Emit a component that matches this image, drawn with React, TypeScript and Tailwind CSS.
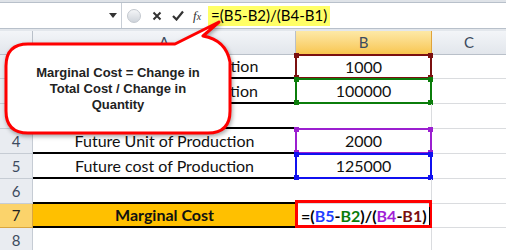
import React from 'react';

const rows = [1, 2, 3, 4, 5, 6, 7, 8];
const rowH = ['h-[24px]', 'h-[25px]', 'h-[25px]', 'h-[25px]', 'h-[25px]', 'h-[25px]', 'h-[24px]', 'h-[25px]'];

const aText: Record<number, string> = {
  1: 'Current Unit of Production',
  2: 'Current cost of Production',
  4: 'Future Unit of Production',
  5: 'Future cost of Production',
};

const bRange: Record<number, { value: string; color: string; sq: string }> = {
  1: { value: '1000', color: 'border-[#7b1010]', sq: 'bg-[#7b1010]' },
  2: { value: '100000', color: 'border-[#0b7d0b]', sq: 'bg-[#0b7d0b]' },
  4: { value: '2000', color: 'border-[#9b1fd0]', sq: 'bg-[#9b1fd0]' },
  5: { value: '125000', color: 'border-[#1010f0]', sq: 'bg-[#1010f0]' },
};

const Corner = ({ cls, pos }: { cls: string; pos: string }) => (
  <span className={`absolute w-[5px] h-[5px] ${cls} ${pos}`} />
);

const FormulaBar = () => (
  <div className="flex h-[26px] border-b border-[#b8c0ca] bg-white">
    <div className="w-[122px] flex items-center justify-end pr-[4px] border-r border-[#c8ced6]">
      <svg width="8" height="5" viewBox="0 0 8 5"><path d="M0 0h8L4 5z" fill="#333" /></svg>
    </div>
    <div className="w-[85px] flex items-center bg-white">
      <span className="ml-[5px] w-[14px] h-[14px] rounded-full bg-gradient-to-b from-[#f4f5f7] to-[#cfd4db] border border-[#c3c8cf]" />
      <svg className="ml-[11px]" width="10" height="10" viewBox="0 0 10 10">
        <path d="M1.5 1.5l7 7M8.5 1.5l-7 7" stroke="#333" strokeWidth="2" />
      </svg>
      <svg className="ml-[10px]" width="12" height="11" viewBox="0 0 12 11">
        <path d="M1 6l3.5 3.5L11 1.5" stroke="#333" strokeWidth="2.2" fill="none" />
      </svg>
      <span className="ml-[9px] text-[13px] italic text-[#333] leading-none" style={{ fontFamily: '"Liberation Serif", serif' }}>
        f<span className="text-[10px]">x</span>
      </span>
    </div>
    <div className="flex-1 flex items-center">
      <span className="ml-[1px] h-[20px] px-[3px] flex items-center bg-[#ffff66] text-[15px] text-black whitespace-nowrap">
        =(B5-B2)/(B4-B1)
      </span>
    </div>
  </div>
);

const Callout = () => (
  <div className="absolute left-0 top-0 w-[240px] h-[140px] pointer-events-none">
    <svg width="240" height="140" className="absolute left-0 top-0 drop-shadow-[1px_2px_2px_rgba(0,0,0,0.35)]">
      <path
        d="M28 44 H175 L219 22 L203 36 Q226 40 230 62 V111 Q230 133 208 133 H28 Q6 133 6 111 V66 Q6 44 28 44 Z"
        fill="white"
        stroke="#ff0000"
        strokeWidth="3"
        strokeLinejoin="round"
      />
    </svg>
    <div
      className="absolute left-[8px] top-[65px] w-[220px] text-center text-[13px] leading-[16px] font-bold text-[#222]"
      style={{ fontFamily: '"Liberation Sans", Arial, sans-serif' }}
    >
      Marginal Cost = Change in
      <br />
      Total Cost / Change in
      <br />
      Quantity
    </div>
  </div>
);

const Formula = () => (
  <span className="relative w-full pl-[5px] text-[16px] font-bold text-black whitespace-nowrap flex items-center">
    <span>=(</span>
    <span className="text-[#1f3fff]">B5</span>
    <span>-</span>
    <span className="text-[#0b7d0b]">B2</span>
    <span>)/(</span>
    <span className="text-[#a21fd6]">B4</span>
    <span>-</span>
    <span className="text-[#7b1010]">B1</span>
    <span>)</span>
    <span className="w-px h-[18px] bg-black ml-[2px]" />
  </span>
);

export default function App() {
  return (
    <div
      className="relative w-[506px] h-[250px] overflow-hidden bg-white"
      style={{ fontFamily: 'Lato, "Open Sans", sans-serif' }}
    >
      <div className="h-[3px] bg-[#dfe3e8] border-b border-[#b8c0ca]" />
      <FormulaBar />
      <div className="h-[2px] bg-[#e3e7ec]" />

      <div className="grid grid-cols-[33px_263px_136px_74px]">
        {/* header row */}
        <div className="relative h-[24px] bg-gradient-to-b from-[#f3f5f8] to-[#e2e6ec] border-r border-b border-[#b9c0c9]">
          <svg className="absolute right-[2px] bottom-[2px]" width="9" height="9" viewBox="0 0 9 9">
            <path d="M9 0V9H0z" fill="#c4cad2" />
          </svg>
        </div>
        <div className="h-[24px] flex items-center justify-center bg-gradient-to-b from-[#f3f5f8] to-[#e2e6ec] border-r border-b border-[#b9c0c9] text-[15px] text-[#3c4b5e]">
          A
        </div>
        <div className="h-[24px] flex items-center justify-center bg-gradient-to-b from-[#fde9a6] to-[#f8c64e] border-r border-b border-[#e0a33a] text-[15px] text-[#3c4b5e]">
          B
        </div>
        <div className="h-[24px] flex items-center justify-center bg-gradient-to-b from-[#f3f5f8] to-[#e2e6ec] border-b border-[#b9c0c9] text-[15px] text-[#3c4b5e]">
          C
        </div>

        {rows.map((r, i) => {
          const h = rowH[i];
          const isTotal = r === 7;
          const inA = r <= 7;
          const range = bRange[r];
          return (
            <React.Fragment key={r}>
              <div
                className={`${h} flex items-center justify-center border-r border-b text-[15px] ${
                  isTotal
                    ? 'bg-[#fbd36b] border-[#d9a640] text-[#222]'
                    : 'bg-[#e9ecf1] border-[#c6ccd4] text-[#3c4b5e]'
                }`}
              >
                {r}
              </div>
              <div
                className={`${h} flex items-center justify-center text-[16px] text-[#111] ${
                  inA ? 'border-b-2 border-black' : 'border-b border-[#dadcdf]'
                } ${isTotal ? 'bg-[#ffc000] font-bold' : ''}`}
              >
                {isTotal ? 'Marginal Cost' : aText[r] ?? ''}
              </div>
              <div className={`relative ${h} flex items-center justify-center text-[16px] text-[#111] border-r border-b border-[#dadcdf]`}>
                {range && (
                  <>
                    <span className={`absolute -left-px -right-px -top-px -bottom-px border-2 ${range.color}`} />
                    <Corner cls={range.sq} pos="-left-[2px] -top-[2px]" />
                    <Corner cls={range.sq} pos="-right-[2px] -top-[2px]" />
                    <Corner cls={range.sq} pos="-left-[2px] -bottom-[2px]" />
                    <Corner cls={range.sq} pos="-right-[2px] -bottom-[2px]" />
                    <span className="relative">{range.value}</span>
                  </>
                )}
                {isTotal && (
                  <>
                    <span className="absolute -left-px -right-px -top-[4px] -bottom-px border-[3px] border-[#ff0000]" />
                    <Formula />
                  </>
                )}
              </div>
              <div className={`${h} border-b border-[#dadcdf]`} />
            </React.Fragment>
          );
        })}
      </div>

      <Callout />
    </div>
  );
}
